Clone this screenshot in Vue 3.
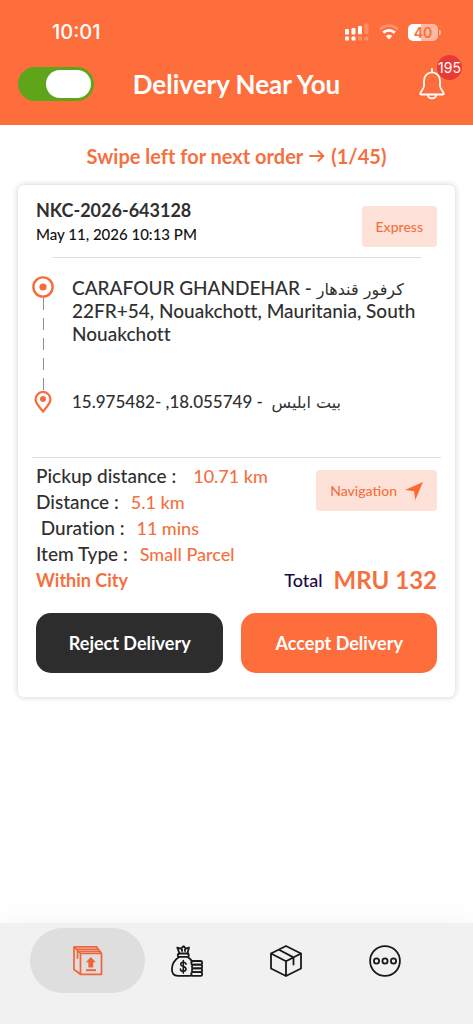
<script setup>
import { ref } from 'vue'

const online = ref(true)
const active = ref('orders')

const order = {
  code: 'NKC-2026-643128',
  date: 'May 11, 2026 10:13 PM',
  type: 'Express',
  total: 'MRU 132',
  scope: 'Within City',
}

const facts = [
  { label: 'Pickup distance :', value: '10.71 km', wide: true },
  { label: 'Distance :', value: '5.1 km' },
  { label: '\u00a0Duration :', value: '11 mins' },
  { label: 'Item Type :', value: 'Small Parcel' },
]
</script>

<template>
  <div class="screen">
    <header class="header">
      <div class="status">
        <span class="clock">10:01</span>
        <div class="indicators">
          <svg class="signal" viewBox="0 0 25 18" fill="#fff" aria-hidden="true">
            <rect x="0" y="6" width="4" height="5.4" rx="1" />
            <rect x="6.5" y="5" width="4" height="6.4" rx="1" />
            <rect x="13" y="3" width="4" height="8.2" rx="1" />
            <rect x="19.4" y="0.5" width="4" height="10.5" rx="1" opacity=".22" />
            <rect x="0" y="13.6" width="4" height="4" rx="1" />
            <rect x="6.5" y="13.6" width="4" height="4" rx="1" />
            <rect x="13" y="13.6" width="4" height="4" rx="1" opacity=".22" />
            <rect x="19.4" y="13.6" width="4" height="4" rx="1" opacity=".22" />
          </svg>
          <svg class="wifi" viewBox="0 0 20 18" fill="none" stroke="#fff" aria-hidden="true">
            <path d="M1.2 6.2C6.2 1.4 13.8 1.4 18.8 6.2" stroke-width="2.6" opacity=".25" />
            <path d="M4.2 9.6C7.6 6.5 12.4 6.5 15.8 9.6" stroke-width="2.8" />
            <path d="M10 16.4 6.8 13C8.6 11.2 11.4 11.2 13.2 13Z" fill="#fff" stroke="none" />
          </svg>
          <div class="battery"><span class="level">40</span></div>
        </div>
      </div>
      <div class="bar">
        <input v-model="online" class="toggle" type="checkbox" role="switch" aria-label="Online" />
        <h1 class="title">Delivery Near You</h1>
        <button class="bell" type="button" aria-label="Notifications">
          <svg viewBox="0 0 26 32" fill="none" stroke="#fff" stroke-width="1.8" stroke-linecap="round" stroke-linejoin="round" aria-hidden="true">
            <path d="M13 1v3.4M13 4.4c-4.700 0-8 3.600-8 8.400v5.200c0 3.200-3.600 5.600-3.800 7.600 0 .6.300.9.900.9h21.800c.6 0 .9-.3.900-.9-.2-2-3.800-4.400-3.800-7.600v-5.200c0-4.800-3.300-8.400-8-8.400zM8.800 26.500c.3 5.200 8.100 5.200 8.400 0" />
          </svg>
          <span class="badge">195</span>
        </button>
      </div>
    </header>

    <main class="main">
      <p class="hint">
        Swipe left for next order
        <svg viewBox="0 0 16 14" fill="none" stroke="currentColor" stroke-width="2" stroke-linecap="round" stroke-linejoin="round" aria-hidden="true"><path d="M1 7h13M9.500 2.200 14.400 7 9.500 11.800" /></svg>
        (1/45)
      </p>

      <article class="card">
        <div class="head">
          <div>
            <h2 class="code">{{ order.code }}</h2>
            <p class="date">{{ order.date }}</p>
          </div>
          <span class="chip">{{ order.type }}</span>
        </div>
        <hr class="rule inset" />

        <div class="route">
          <div class="track">
            <svg class="origin" viewBox="0 0 22 22" aria-hidden="true"><circle cx="11" cy="11" r="9.600" fill="none" stroke="#f96a3a" stroke-width="2.400" /><circle cx="11" cy="11" r="3.600" fill="#f96a3a" /></svg>
            <span class="dashes"></span>
            <svg class="pin" viewBox="0 0 18 22" aria-hidden="true"><path d="M9 20.500C6.500 17.200 1.500 12.500 1.500 8.500a7.500 7.500 0 0 1 15 0C16.500 12.500 11.500 17.200 9 20.500Z" fill="none" stroke="#f96a3a" stroke-width="2.200" /><circle cx="9" cy="8" r="3" fill="#f96a3a" /></svg>
          </div>
          <div class="stops">
            <p class="stop">CARAFOUR GHANDEHAR - <bdi class="ar" lang="ar">كرفور قندهار</bdi><br />22FR+54, Nouakchott, Mauritania, South Nouakchott</p>
            <p class="stop coords">15.975482- ,18.055749 -&nbsp; <bdi class="ar" lang="ar">بيت ابليس</bdi></p>
          </div>
        </div>
        <hr class="rule" />

        <div class="details">
          <dl class="facts">
            <div v-for="f in facts" :key="f.label" class="fact" :class="{ wide: f.wide }">
              <dt>{{ f.label }}</dt>
              <dd>{{ f.value }}</dd>
            </div>
          </dl>
          <button class="chip nav-chip" type="button">
            Navigation
            <svg viewBox="0 0 18 18" fill="#fc6a36" aria-hidden="true"><path d="M18 0 10.300 18 9 9.200 0 7.900Z" /></svg>
          </button>
        </div>
        <div class="summary">
          <span class="scope">{{ order.scope }}</span>
          <span class="total">Total <strong>{{ order.total }}</strong></span>
        </div>

        <div class="actions">
          <button class="action reject" type="button">Reject Delivery</button>
          <button class="action accept" type="button">Accept Delivery</button>
        </div>
      </article>
    </main>

    <nav class="tabs">
      <button class="tab" :class="{ on: active === 'orders' }" type="button" aria-label="Orders" @click="active = 'orders'">
        <svg viewBox="0 0 32 32" fill="none" stroke="#f06437" stroke-width="1.700" stroke-linejoin="round" aria-hidden="true">
          <path d="M8.500 8.500h21v20.800h-21zM8.500 29.300 2 24.500V1.800L8.500 8.500M2 1.800h22.500l5 6.700M4.500 4.400h22M6.300 6.500h21.500M5.500 5.200v8.500" />
          <path d="M18.800 12 23.800 17.300H21.200V22.400H16.400V17.300H13.800Z" fill="#f06437" stroke="none" />
          <path d="M14 25.200h10" stroke-width="2" />
        </svg>
      </button>
      <button class="tab" :class="{ on: active === 'earnings' }" type="button" aria-label="Earnings" @click="active = 'earnings'">
        <svg viewBox="0 0 32 32" fill="none" stroke="#191919" stroke-width="1.800" stroke-linecap="round" stroke-linejoin="round" aria-hidden="true">
          <path d="M8.500 8.500 6.300 2.600 9.800 3.600 12.600 1.200 14.800 3.600 18 2.500 16.400 8.500M11 4.500v1.500M14 4.500v1.500" />
          <rect x="6.800" y="8.500" width="11" height="3.400" rx="1.500" />
          <path d="M8 12C3.500 15 .9 19.500.9 24.300c0 4.200 2.500 6.500 6.100 6.500h11.700c.8 0 1.500-.2 2.100-.6M16.800 12c1.800 1.300 3.300 2.800 4.300 4.600" />
          <path d="M15 19.200c-.3-1.500-1.400-2-2.700-2-1.600 0-2.600.8-2.600 2.100 0 3.100 5.300 1.500 5.300 4.800 0 1.400-1.100 2.200-2.700 2.200s-2.700-.7-2.900-2.200M12.300 15.500v12.600" stroke-width="1.600" />
          <rect x="20.300" y="16" width="10.800" height="3.700" rx="1.400" />
          <rect x="21" y="19.700" width="10.100" height="3.700" rx="1.400" />
          <rect x="21" y="23.400" width="10.100" height="3.700" rx="1.400" />
          <rect x="20.300" y="27.100" width="10.800" height="3.800" rx="1.400" />
        </svg>
      </button>
      <button class="tab" :class="{ on: active === 'parcels' }" type="button" aria-label="Parcels" @click="active = 'parcels'">
        <svg viewBox="0 0 32 32" fill="none" stroke="#191919" stroke-width="1.800" stroke-linecap="round" stroke-linejoin="round" aria-hidden="true">
          <path d="M16 1 31 8.500V23.500L16 31 1 23.500V8.500ZM1 8.500 16 16.200 31 8.500M16 16.200V31M9 4.700 23.500 12.400V19.500" />
        </svg>
      </button>
      <button class="tab" :class="{ on: active === 'more' }" type="button" aria-label="More" @click="active = 'more'">
        <svg viewBox="0 0 32 32" fill="none" stroke="#191919" stroke-width="1.800" aria-hidden="true">
          <circle cx="16" cy="16" r="14.900" />
          <circle cx="7.500" cy="16" r="2.600" /><circle cx="16" cy="16" r="2.600" /><circle cx="24.500" cy="16" r="2.600" />
        </svg>
      </button>
    </nav>
  </div>
</template>

<style>
body {
  background: #fff;
}
</style>

<style scoped>
.screen,
.screen * {
  box-sizing: border-box;
}
.screen {
  min-height: 100vh;
  display: flex;
  flex-direction: column;
  font-family: Lato, 'DejaVu Sans', sans-serif;
  font-variant-ligatures: no-common-ligatures;
  color: #303030;
  background: #fff;
}
h1, h2, p, dl, dd {
  margin: 0;
}
button {
  font-family: inherit;
  border: 0;
  cursor: pointer;
}
svg {
  display: block;
  flex: none;
}
.header {
  background: #fe6e3c;
  color: #fff;
  padding: 20px 18px 24px;
}
.status {
  display: flex;
  justify-content: space-between;
  align-items: center;
  height: 24px;
  padding: 0 13px 0 34px;
}
.clock {
  font: 500 20px/24px Inter, sans-serif;
}
.indicators {
  display: flex;
  align-items: center;
  gap: 9px;
}
.signal {
  width: 25px;
  height: 18px;
}
.wifi {
  width: 20px;
  height: 18px;
}
.battery {
  position: relative;
  width: 30px;
  height: 17px;
  margin-right: 4px;
  border-radius: 5px;
  background: linear-gradient(90deg, #fff 42%, #ffb9a0 42%);
}
.battery::after {
  content: '';
  position: absolute;
  left: 31px;
  top: 6px;
  width: 2px;
  height: 5px;
  border-radius: 0 2px 2px 0;
  background: #ffb9a0;
}
.level {
  display: block;
  text-align: center;
  color: #f4713f;
  font: 600 14px/17px Inter, sans-serif;
}
.bar {
  display: grid;
  grid-template-columns: 76px 1fr 76px;
  align-items: center;
  height: 34px;
  margin-top: 23px;
}
.toggle {
  appearance: none;
  margin: 0;
  width: 76px;
  height: 34px;
  padding: 3px;
  border-radius: 17px;
  background: #a9a9a9;
  display: flex;
  cursor: pointer;
}
.toggle::before {
  content: '';
  width: 45px;
  height: 28px;
  border-radius: 14px;
  background: #fff;
}
.toggle:checked {
  background: #5ea51a;
  justify-content: flex-end;
}
.title {
  font-size: 26px;
  line-height: 34px;
  font-weight: 700;
  text-align: center;
}
.bell {
  position: relative;
  justify-self: end;
  margin-right: 10px;
  padding: 0;
  background: none;
  color: #fff;
}
.bell svg {
  width: 26px;
  height: 32px;
}
.badge {
  position: absolute;
  left: 18px;
  top: -13px;
  width: 25px;
  height: 25px;
  border-radius: 50%;
  background: #e83a37;
  font: 400 14px/25px Inter, sans-serif;
  display: flex;
  justify-content: center;
}
.main {
  flex: 1;
  padding: 18px;
}
.hint {
  display: flex;
  justify-content: center;
  align-items: center;
  gap: 6px;
  color: #f4713f;
  font-size: 20px;
  line-height: 26px;
  font-weight: 700;
}
.hint svg {
  width: 16px;
  height: 14px;
}
.card {
  margin-top: 16px;
  padding: 13px 18px 24px;
  border-radius: 6px;
  background: #fff;
  box-shadow: 0 0 6px rgba(0, 0, 0, 0.2);
}
.head {
  display: flex;
  justify-content: space-between;
  height: 59px;
}
.code {
  font-size: 18px;
  line-height: 24px;
  font-weight: 700;
}
.date {
  color: #111;
  font-size: 15px;
  line-height: 24px;
  font-weight: 500;
}
.chip {
  display: flex;
  align-items: center;
  justify-content: center;
  gap: 8px;
  height: 41px;
  padding: 0 14px;
  border-radius: 4px;
  background: #fee1d8;
  color: #f4713f;
  font-size: 14px;
  font-weight: 500;
}
.head .chip {
  margin-top: 8px;
}
.rule {
  height: 1px;
  border: 0;
  margin: 0 -4px;
  background: #dedede;
}
.rule.inset {
  margin: 0 16px;
}
.route {
  display: flex;
  gap: 18px;
  height: 199px;
  padding: 18px 0 44px;
}
.track {
  width: 22px;
  margin-left: -4px;
  display: flex;
  flex-direction: column;
  align-items: center;
}
.origin {
  width: 22px;
  height: 22px;
}
.dashes {
  flex: 1;
  width: 1px;
  background: repeating-linear-gradient(#8c8c8c 0 12px, transparent 12px 20px);
}
.pin {
  width: 18px;
  height: 22px;
}
.stops {
  flex: 1;
  display: flex;
  flex-direction: column;
  justify-content: space-between;
}
.stop {
  font-size: 19px;
  line-height: 23px;
  font-weight: 500;
}
.coords {
  font-size: 17px;
}
.ar {
  font-family: 'DejaVu Sans', sans-serif;
  font-size: 16px;
  font-weight: 400;
  line-height: 1;
}
.details {
  display: flex;
  justify-content: space-between;
  align-items: flex-start;
  padding-top: 5px;
}
.fact {
  display: flex;
  gap: 12px;
  font-size: 19px;
  line-height: 26px;
  font-weight: 500;
}
.fact.wide {
  gap: 17px;
}
.fact dd {
  font-size: 18px;
}
.fact dd,
.scope {
  color: #f4713f;
}
.nav-chip {
  margin-top: 7px;
}
.nav-chip svg {
  width: 18px;
  height: 18px;
}
.summary {
  display: flex;
  justify-content: space-between;
  align-items: center;
  height: 26px;
}
.scope {
  font-size: 18px;
  font-weight: 700;
}
.total {
  display: flex;
  align-items: center;
  gap: 11px;
  color: #1a0b45;
  font-size: 18px;
  line-height: 30px;
  font-weight: 500;
}
.total strong {
  color: #f4713f;
  font-size: 24px;
  font-weight: 700;
}
.actions {
  display: grid;
  grid-template-columns: 187fr 195fr;
  gap: 18px;
  margin-top: 20px;
}
.action {
  height: 60px;
  padding: 0;
  border-radius: 15px;
  color: #fff;
  font-size: 18px;
  font-weight: 700;
}
.reject {
  background: #2d2d2d;
}
.accept {
  background: #fe6e3c;
}
.tabs {
  display: grid;
  grid-template-columns: repeat(4, minmax(0, 1fr));
  justify-items: center;
  padding: 5px 38px 31px;
  background: #f1f1f1;
  box-shadow: 0 -4px 24px rgba(0, 0, 0, 0.04);
}
.tab {
  display: flex;
  align-items: center;
  justify-content: center;
  width: 115px;
  height: 65px;
  padding: 0;
  border-radius: 33px;
  background: none;
}
.tab.on {
  background: #dedede;
}
.tab svg {
  width: 32px;
  height: 32px;
}
</style>
